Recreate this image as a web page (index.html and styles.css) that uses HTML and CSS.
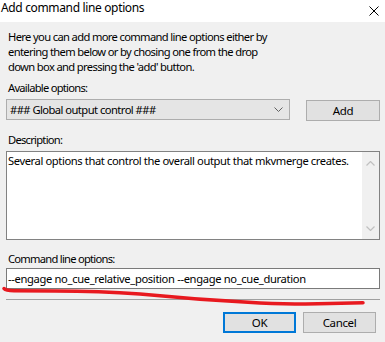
FILE: index.html
```html
<!DOCTYPE html>
<html>
<head>
	<meta charset="UTF-8">
	<title>Add command line options</title>
	<link rel="stylesheet" href="styles.css">
</head>
<body>
<div class="dialog">
	<div class="titlebar">
		<span class="title">Add command line options</span>
		<svg class="close" width="10" height="10" viewBox="0 0 10 10">
			<path d="M0.5 0.5 L9.5 9.5 M9.5 0.5 L0.5 9.5" stroke="#000" stroke-width="1" fill="none"/>
		</svg>
	</div>

	<div class="content">
		<p class="intro">Here you can add more command line options either by<br>entering them below or by chosing one from the drop<br>down box and pressing the 'add' button.</p>

		<div class="label label-first">Available options:</div>
		<div class="row">
			<div class="combo">
				<span>### Global output control ###</span>
				<svg width="9" height="5" viewBox="0 0 9 5">
					<path d="M0.5 0.5 L4.5 4.5 L8.5 0.5" stroke="#606060" stroke-width="1" fill="none"/>
				</svg>
			</div>
			<button class="btn btn-add">Add</button>
		</div>

		<div class="label">Description:</div>
		<div class="memo">
			<div class="memo-text">Several options that control the overall output that mkvmerge creates.</div>
			<div class="vscroll">
				<svg width="9" height="5" viewBox="0 0 9 5">
					<path d="M0.5 4.5 L4.5 0.5 L8.5 4.5" stroke="#c0c0c0" stroke-width="1.2" fill="none"/>
				</svg>
				<svg width="9" height="5" viewBox="0 0 9 5">
					<path d="M0.5 0.5 L4.5 4.5 L8.5 0.5" stroke="#c0c0c0" stroke-width="1.2" fill="none"/>
				</svg>
			</div>
		</div>

		<div class="label label-cmd">Command line options:</div>
		<div class="edit">--engage no_cue_relative_position --engage no_cue_duration</div>

		<div class="sep"></div>

		<div class="buttons">
			<button class="btn btn-ok">OK</button>
			<button class="btn">Cancel</button>
		</div>
	</div>

	<!-- red marker stroke drawn on top of the screenshot -->
	<svg class="scribble" width="385" height="342" viewBox="0 0 385 342">
		<path d="M4 288.5 Q6 290.6 14 290.8 L55 291 Q100 291 140 294 Q200 300 260 303 Q300 304.6 330 303.6 L363 302.8"
			stroke="#e8191f" stroke-width="3.5" stroke-linecap="round" stroke-linejoin="round" fill="none"/>
	</svg>
</div>
</body>
</html>
```

FILE: styles.css
```css
html, body{
	margin: 0;
	padding: 0;
}
body{
	font-family: "Noto Sans", "Open Sans", sans-serif;
	font-size: 11.2px;
	line-height: 15px;
	letter-spacing: -0.45px;
	color: #000;
	background-color: #f0f0f0;
}
.dialog{
	position: relative;
	width: 385px;
	height: 342px;
	background-color: #f0f0f0;
	overflow: hidden;
}
.titlebar{
	height: 22px;
	background-color: #fff;
	display: flex;
	justify-content: space-between;
	align-items: flex-start;
	padding: 0 6px 0 1px;
}
.title{
	font-size: 12px;
	letter-spacing: -0.35px;
}
.close{
	margin-top: 6px;
}
.content{
	padding: 0 5px 0 6px;
	display: flex;
	flex-direction: column;
}
.intro{
	margin: 7px 0 0 2px;
	letter-spacing: -0.65px;
}
.label{
	margin: 11px 0 0 2px;
	letter-spacing: -0.75px;
}
.label-first{
	margin-top: 6px;
}
.row{
	display: flex;
	align-items: flex-start;
	justify-content: space-between;
	margin-top: 4px;
}
.combo{
	box-sizing: border-box;
	width: 284px;
	height: 21px;
	border: 1px solid #adadad;
	background-color: #e5e5e5;
	display: flex;
	align-items: center;
	justify-content: space-between;
	padding: 0 6px 0 3px;
	letter-spacing: -0.55px;
}
.btn{
	box-sizing: border-box;
	height: 21px;
	border: 1px solid #adadad;
	background-color: #e1e1e1;
	font-family: inherit;
	font-size: 11.5px;
	line-height: 15px;
	letter-spacing: -0.35px;
	color: #000;
	padding: 0;
}
.btn-add{
	width: 74px;
	margin-top: 1px;
}
.memo{
	box-sizing: border-box;
	height: 89px;
	margin-top: 4px;
	border: 1px solid #828282;
	background-color: #fff;
	display: flex;
}
.memo-text{
	flex: 1;
	min-width: 0;
	white-space: nowrap;
	padding: 1px 0 0 1px;
	letter-spacing: -0.4px;
}
.vscroll{
	width: 17px;
	flex: none;
	background-color: #f0f0f0;
	display: flex;
	flex-direction: column;
	justify-content: space-between;
	align-items: center;
	padding: 9px 0 8px;
}
.label-cmd{
	margin-top: 11px;
}
.edit{
	box-sizing: border-box;
	height: 21px;
	margin-top: 2px;
	border: 1px solid #7a7a7a;
	background-color: #fff;
	padding: 2px 1px 0;
	letter-spacing: -0.35px;
}
.sep{
	height: 1px;
	margin-top: 10px;
	background-color: #a0a0a0;
}
.buttons{
	display: flex;
	justify-content: flex-end;
	gap: 7px;
	margin-top: 12px;
	padding-right: 4px;
}
.buttons .btn{
	width: 73px;
}
.btn-ok{
	border: 2px solid #0078d7;
}
.scribble{
	position: absolute;
	left: 0;
	top: 0;
	pointer-events: none;
}
```
